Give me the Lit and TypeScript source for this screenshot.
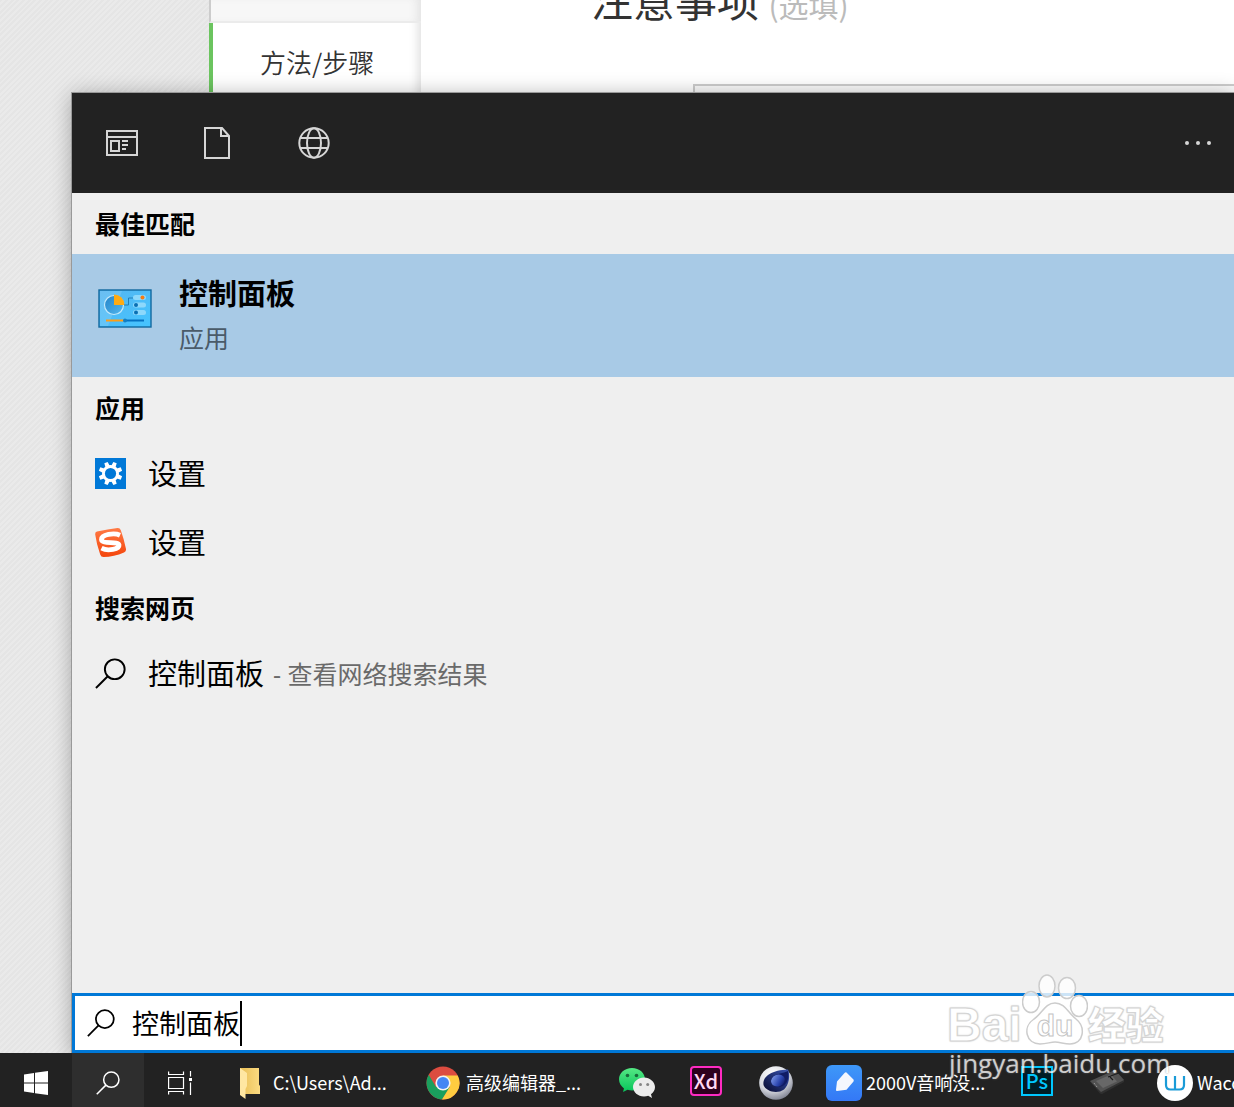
import { LitElement, html, css, svg, nothing, TemplateResult } from "lit";
import { customElement, state } from "lit/decorators.js";

const magnifier = (cls: string, width: number) => html`
  <svg class=${cls} viewBox="0 0 32 32" fill="none" stroke="currentColor" stroke-width=${width} aria-hidden="true">
    <circle cx="20.4" cy="11.6" r="10.2" /><path d="M13.2 18.8L1 31" />
  </svg>`;

const controlPanelIcon = html`
  <svg class="tile" viewBox="0 0 54 40" aria-hidden="true">
    <defs>
      <linearGradient id="cp" x1="0" y1="0" x2="1" y2="1"><stop offset="0" stop-color="#55b5f0" /><stop offset="1" stop-color="#45c4ff" /></linearGradient>
      <linearGradient id="pie" x1="0" y1="0" x2="1" y2="1"><stop offset="0" stop-color="#2384c9" /><stop offset="1" stop-color="#53b7ee" /></linearGradient>
    </defs>
    <rect x="1" y="1" width="52" height="37" fill="url(#cp)" stroke="#12699f" stroke-width="1.4" />
    <path d="M2 2H24L10 37H2Z" fill="#fff" opacity=".13" />
    <circle cx="16" cy="16" r="9.5" fill="url(#pie)" stroke="#c4e9fb" stroke-width="1.2" />
    <path d="M16 16V5.500A10.500 10.500 0 0 1 26.500 16Z" fill="#ffab12" />
    <path d="M26 16H30.500V9H35" fill="none" stroke="#217eb8" />
    <g fill="#8dd8fb"><rect x="35" y="6" width="13" height="5" rx="2.500" /><rect x="35" y="13.500" width="13" height="5" rx="2.500" /><rect x="35" y="21" width="13" height="5" rx="2.500" /></g>
    <circle cx="44.500" cy="8.500" r="2" fill="#f47b13" /><circle cx="38" cy="16" r="2" fill="#096fb4" /><circle cx="38" cy="23.500" r="2" fill="#096fb4" />
    <path d="M8 31.500H26" stroke="#ff9d14" stroke-width="2" /><path d="M28 31.500H46" stroke="#0672c2" stroke-width="2" />
    <circle cx="27" cy="31.500" r="2" fill="#1380c4" />
  </svg>`;

const gearIcon = html`
  <svg class="glyph" viewBox="0 0 31 31" aria-hidden="true">
    <rect width="31" height="31" fill="#0078d7" />
    <g transform="translate(15.500 15.500)" fill="#fff">
      ${[22.5, 67.5, 112.5, 157.5, 202.5, 247.5, 292.5, 337.5].map(
        (a) => svg`<path transform="rotate(${a})" d="M-2.300 -7L-1.800 -11.800H1.800L2.300 -7Z" />`
      )}
      <circle r="8.500" />
    </g>
    <circle cx="15.500" cy="15.500" r="5.600" fill="#0078d7" />
  </svg>`;

const sogouIcon = html`
  <svg class="glyph" viewBox="0 0 31 31" aria-hidden="true">
    <defs><linearGradient id="sg" x1="0" y1="0" x2="0" y2="1"><stop offset="0" stop-color="#ff7a45" /><stop offset="1" stop-color="#f4460c" /></linearGradient></defs>
    <path d="M2 4.500Q13 2 22.500 1Q25 .8 25.800 3.200Q29 12 31 22Q31.300 24.500 29 25.500Q19 29.800 8.500 30Q6 30 5.200 27.500Q1.500 17 .2 7.500Q0 5 2 4.500Z" fill="url(#sg)" />
    <path d="M25 8.200C19 5.500 6.500 7.500 6.500 12.500C6.500 17.500 23 14 24 18C24.500 22 13 24.500 6.500 21.200" fill="none" stroke="#fff" stroke-width="4.800" />
  </svg>`;

const startIcon = html`
  <svg class="s24" viewBox="0 0 24 24" fill="#fff" aria-hidden="true">
    <path d="M0 3.400L10 2V11.400H0ZM11 1.800L24 0V11.400H11ZM0 12.400H10V22L0 20.600ZM11 12.400H24V24L11 22.200Z" />
  </svg>`;

const taskViewIcon = html`
  <svg class="s24" viewBox="0 0 24 24" fill="none" stroke="#fff" stroke-width="1.200" aria-hidden="true">
    <path d="M.6 .5V3.500H15.500V.5M.6 23.500V20.500H15.500V23.500M.6 6.500H15.500V17.500H.6ZM22.500 0V5.500M22.500 11.500V24" />
    <rect x="21" y="7" width="3" height="3" fill="#fff" stroke="none" />
  </svg>`;

const folderIcon = html`
  <svg class="app-icon" viewBox="0 0 36 36" aria-hidden="true">
    <defs><linearGradient id="fd" x1="0" x2="1"><stop offset="0" stop-color="#e9bf55" /><stop offset="1" stop-color="#fbdb82" /></linearGradient></defs>
    <path d="M7 3H26V19.500L27 21V29H7Z" fill="url(#fd)" />
    <path d="M7 3L14 8V21L12.500 24V34L7 30Z" fill="#ffe7a2" />
  </svg>`;

const chromeIcon = html`
  <svg class="app-icon" viewBox="0 0 36 36" aria-hidden="true">
    <circle cx="17" cy="18" r="16.500" fill="#dc4c40" />
    <path d="M2.700 9.800A16.500 16.500 0 0 0 16 34.500L24 22L10 22Z" fill="#1a9f5d" />
    <path d="M17 10.500H31.700A16.500 16.500 0 0 1 16 34.500L24 21.500Z" fill="#ffcc40" />
    <circle cx="17" cy="18" r="7.600" fill="#f3f3f3" /><circle cx="17" cy="18" r="6" fill="#4486f4" />
  </svg>`;

const wechatIcon = html`
  <svg class="app-icon" viewBox="0 0 36 36" aria-hidden="true">
    <defs><linearGradient id="wc" x1="0" y1="0" x2="0" y2="1"><stop offset="0" stop-color="#55e884" /><stop offset="1" stop-color="#07c45b" /></linearGradient></defs>
    <path d="M13 3C5.500 3 0 8 0 14.300C0 18 2 21.300 5 23.400L4 27L8.500 24.800C10 25.300 11.500 25.500 13 25.500C20.500 25.500 26 20.500 26 14.300S20.500 3 13 3Z" fill="url(#wc)" />
    <circle cx="8.500" cy="10.500" r="1.800" fill="#176c3b" /><circle cx="17.500" cy="10.500" r="1.800" fill="#176c3b" />
    <path d="M25 12.500C19 12.500 14 17 14 22S19 31.500 25 31.500C26.500 31.500 28 31.300 29.200 30.800L33 33L32 29.300C34.500 27.500 36 25 36 22C36 17 31 12.500 25 12.500Z" fill="#ececec" />
    <circle cx="21.500" cy="19.500" r="1.500" fill="#858585" /><circle cx="28.700" cy="19.500" r="1.500" fill="#858585" />
  </svg>`;

const cinemaIcon = html`
  <svg class="app-icon" viewBox="0 0 36 36" aria-hidden="true">
    <defs>
      <radialGradient id="c4a" cx=".4" cy=".25" r=".8"><stop offset="0" stop-color="#fff" /><stop offset=".6" stop-color="#d5d7df" /><stop offset="1" stop-color="#777b8a" /></radialGradient>
      <linearGradient id="c4b" x1="0" y1="1" x2="1" y2="0"><stop offset="0" stop-color="#06092e" /><stop offset="1" stop-color="#3a55b5" /></linearGradient>
      <linearGradient id="c4c" x1="0" y1="0" x2="1" y2="1"><stop offset="0" stop-color="#8ba6f0" /><stop offset=".6" stop-color="#2b45b0" /><stop offset="1" stop-color="#0a1150" /></linearGradient>
    </defs>
    <circle cx="19" cy="18" r="16.800" fill="url(#c4a)" />
    <path d="M31 4.500C33.500 10 32 20 27 24.500C20 29.500 9 26.500 6.500 20C5 11 16 5 31 4.500Z" fill="url(#c4b)" />
    <path d="M31 6C32.500 14 30 21 22.500 22C15 22 11.500 16 16 11.500C20 8.500 26 8.500 31 6Z" fill="#101c66" />
    <ellipse cx="21" cy="15.500" rx="7" ry="5.800" transform="rotate(-20 21 15.500)" fill="url(#c4c)" />
  </svg>`;

const editorIcon = html`
  <svg class="app-icon" viewBox="0 0 36 36" aria-hidden="true">
    <defs><linearGradient id="ed" x1="0" y1="0" x2="0" y2="1"><stop offset="0" stop-color="#3e98f8" /><stop offset="1" stop-color="#3478f6" /></linearGradient></defs>
    <rect width="36" height="36" rx="6" fill="url(#ed)" />
    <path d="M20.500 7.500L27.500 14.500Q28 15.500 27.500 16.500L20.500 24.800L11 26Q9.800 26 10 24.800L11 16.500L18.500 8Q19.500 7 20.500 7.500Z" fill="#f4f7fd" />
  </svg>`;

const tabletIcon = html`
  <svg class="app-icon" viewBox="0 0 36 36" aria-hidden="true">
    <path d="M2 16.500L27 5L36 15V17L14 29L12 28.500Z" fill="#303030" />
    <path d="M2 16L27 5L36 15L13 27Z" fill="#525252" />
    <path d="M8 16L23 9.500L29 16.500L15 23Z" fill="#686868" />
    <path d="M20 12L32 7.500M22 12L25 15" stroke="#1c1c1c" stroke-width="1.200" />
    <path d="M6 18L9 22" stroke="#aaa" stroke-dasharray="1 1" />
  </svg>`;

const wacomIcon = html`
  <svg class="app-icon" viewBox="0 0 36 36" aria-hidden="true">
    <circle cx="18" cy="18" r="18" fill="#fff" />
    <path d="M9 11V20Q9 24.500 13.500 24.500H22.500Q27 24.500 27 20V11M18 11V24" fill="none" stroke="#1a9bd7" stroke-width="2.200" />
  </svg>`;

interface Task { name: string; icon: TemplateResult; label?: string; }

const tasks: Task[] = [
  { name: "资源管理器", icon: folderIcon, label: "C:\\Users\\Ad..." },
  { name: "Chrome", icon: chromeIcon, label: "高级编辑器_..." },
  { name: "微信", icon: wechatIcon },
  { name: "Adobe XD", icon: html`<span class="adobe xd">Xd</span>` },
  { name: "Cinema 4D", icon: cinemaIcon },
  { name: "编辑器", icon: editorIcon, label: "2000V音响没..." },
  { name: "Photoshop", icon: html`<span class="adobe ps">Ps</span>` },
  { name: "数位板", icon: tabletIcon },
  { name: "Wacom", icon: wacomIcon, label: "Wacom" },
];

const fonts = css`
  :host { font-family: "Open Sans", "Noto Sans CJK SC", sans-serif; }
  * { box-sizing: border-box; }
  button { font: inherit; color: inherit; background: none; border: 0; padding: 0; margin: 0; text-align: left; }
  svg { display: block; flex: none; }
`;

@customElement("web-page")
export class WebPage extends LitElement {
  static styles = [fonts, css`
    :host {
      display: grid; grid-template-columns: 209px 212px 1fr; height: 100%; overflow: hidden;
      background: #e6e6e6;
    }
    .gutter { background: repeating-linear-gradient(135deg, #e5e5e5 0 2px, #eaeaea 2px 4px); }
    .steps { display: flex; flex-direction: column; background: #fff; box-shadow: inset -8px 0 8px -4px #e4e4e4; }
    .prev { height: 23px; background: #f7f7f7; border-left: 2px solid #ccc; border-bottom: 2px solid #ebebeb; box-shadow: inset -8px 0 8px -4px #e4e4e4; }
    .step {
      height: 80px; padding-left: 47px; border-left: 4px solid #6bc45f;
      font-size: 26px; line-height: 77px; color: #333; text-decoration: none;
      font-family: "Noto Sans CJK SC", sans-serif; font-weight: 350;
    }
    .body { background: #fff; padding-left: 170px; }
    h2 { margin: -31px 0 0; font-size: 42px; line-height: 60px; font-weight: 400; color: #333; font-family: "Noto Sans CJK SC", sans-serif; }
    small { font-size: 30px; color: #bbb; font-weight: 400; }
    .editor { margin: 50px 0 0 102px; height: 200px; border: 2px solid #ccc; border-right: 0; background: #fafafa; }
  `];
  render() {
    return html`
      <div class="gutter"></div>
      <nav class="steps"><div class="prev"></div><a class="step" href="#steps">方法/步骤</a></nav>
      <section class="body">
        <h2>注意事项 <small>(选填)</small></h2>
        <div class="editor"></div>
      </section>`;
  }
}

@customElement("search-panel")
export class SearchPanel extends LitElement {
  @state() private query = "控制面板";
  static styles = [fonts, css`
    :host { display: flex; flex-direction: column; background: #efefef; color: #000; box-shadow: 0 0 0 1px #999, 0 2px 20px rgba(0, 0, 0, 0.32); }
    header { display: flex; height: 100px; padding-left: 2px; background: #222; color: #d6d6d6; }
    header button { width: 96px; display: flex; align-items: center; justify-content: center; }
    .more { margin-left: auto; }
    header .more { width: 70px; }
    .tab { width: 32px; height: 32px; }
    main { flex: 1; }
    h3 { margin: 0; padding-left: 23px; font-size: 25px; line-height: 62px; font-weight: 700; }
    .best { display: flex; align-items: center; gap: 27px; width: 100%; height: 123px; margin-top: -1px; padding-left: 26px; background: #a8cae6; }
    .tile { width: 54px; height: 40px; margin-bottom: 14px; }
    .best-text { display: flex; flex-direction: column; }
    .best-name { font-size: 29px; line-height: 45px; font-weight: 700; }
    .best-kind { font-size: 25px; line-height: 45px; color: #4a5b69; }
    .row { display: flex; align-items: center; width: 100%; height: 69px; padding-left: 23px; font-size: 29px; line-height: 40px; }
    .glyph { width: 31px; height: 31px; margin-right: 22px; }
    .hint { font-size: 25px; color: #6a6a6a; margin-left: 9px; }
    .box { display: flex; align-items: center; height: 60px; padding-left: 12px; border: 3px solid #0078d7; border-right: 0; background: #fff; }
    .lens { width: 28px; height: 28px; margin-right: 17px; }
    input { width: 4em; padding: 0; border: 0; outline: 0; background: none; color: #000; font: 27px/40px "Noto Sans CJK SC", sans-serif; }
    .caret { width: 2px; height: 45px; background: #000; }
  `];
  private onInput(e: Event) { this.query = (e.target as HTMLInputElement).value; }
  render() {
    return html`
      <header>
        <button aria-label="应用">
          <svg class="tab" viewBox="0 0 32 32" fill="none" stroke="currentColor" stroke-width="2" aria-hidden="true">
            <path d="M1 4H31V28H1ZM1 10H31M5 14H13V24H5ZM16 14H22M16 18H22M16 22H20" />
          </svg>
        </button>
        <button aria-label="文档">
          <svg class="tab" viewBox="0 0 32 32" fill="none" stroke="currentColor" stroke-width="2" aria-hidden="true">
            <path d="M3 1H20L27 9V31H3ZM19 1V9H27" />
          </svg>
        </button>
        <button aria-label="网页">
          <svg class="tab" viewBox="0 0 32 32" fill="none" stroke="currentColor" stroke-width="2" aria-hidden="true">
            <circle cx="16" cy="16" r="14.700" /><ellipse cx="16" cy="16" rx="7" ry="14.700" /><path d="M3 11H29M3 21H29" />
          </svg>
        </button>
        <button class="more" aria-label="更多">
          <svg class="tab" viewBox="0 0 32 32" fill="currentColor" aria-hidden="true"><circle cx="4" cy="16" r="2" /><circle cx="15" cy="16" r="2" /><circle cx="26" cy="16" r="2" /></svg>
        </button>
      </header>
      <main>
        <h3>最佳匹配</h3>
        <button class="best">
          ${controlPanelIcon}
          <span class="best-text"><span class="best-name">控制面板</span><span class="best-kind">应用</span></span>
        </button>
        <h3>应用</h3>
        <button class="row">${gearIcon}<span>设置</span></button>
        <button class="row">${sogouIcon}<span>设置</span></button>
        <h3>搜索网页</h3>
        <button class="row">${magnifier("glyph", 2)}<span>控制面板</span><span class="hint">- 查看网络搜索结果</span></button>
      </main>
      <label class="box">
        ${magnifier("lens", 2)}
        <input aria-label="搜索" .value=${this.query} @input=${this.onInput} />
        <span class="caret"></span>
      </label>`;
  }
}

@customElement("task-bar")
export class TaskBar extends LitElement {
  static styles = [fonts, css`
    :host { display: flex; height: 54px; overflow: hidden; background: #222; color: #fff; }
    button { flex: none; display: flex; align-items: center; padding-top: 6px; }
    .system { width: 72px; justify-content: center; }
    .active { background: #2e2e2e; }
    .s24 { width: 24px; height: 24px; }
    .tasks { display: flex; gap: 33px; padding-left: 17px; }
    .task { width: 36px; gap: 4px; font-size: 18px; line-height: 24px; white-space: nowrap; }
    .wide { width: 160px; }
    .app-icon { width: 36px; height: 36px; }
    .label { font-family: "Noto Sans CJK SC", sans-serif; padding-bottom: 2px; }
    .adobe { width: 32px; height: 30px; margin: 0 2px 4px; font: 500 20px/25px "Noto Sans CJK SC", sans-serif; text-align: center; }
    .xd { border: 2px solid #ff2bc2; border-radius: 4px; background: #2e001e; color: #ffd9f4; }
    .ps { border: 2px solid #00c8ff; background: #001d26; color: #00c8ff; }
  `];
  render() {
    return html`
      <button class="system" aria-label="开始">${startIcon}</button>
      <button class="system active" aria-label="搜索">${magnifier("s24", 2)}</button>
      <button class="system" aria-label="任务视图">${taskViewIcon}</button>
      <div class="tasks">
        ${tasks.map((t) => html`
          <button class="task ${t.label ? "wide" : ""}" aria-label=${t.name}>
            ${t.icon}${t.label ? html`<span class="label">${t.label}</span>` : nothing}
          </button>`)}
      </div>`;
  }
}

@customElement("site-mark")
export class SiteMark extends LitElement {
  static styles = [fonts, css`
    :host { display: flex; flex-direction: column; width: 222px; color: #fff; pointer-events: none; }
    .brand { display: flex; align-items: flex-end; height: 72px; }
    .bai { font: 700 48px/44px "Liberation Sans", sans-serif; -webkit-text-stroke: 1px #d4d4d4; text-shadow: 0 0 2px #aaa; }
    .paw { width: 66px; height: 74px; }
    .cn { font: 900 38px/48px "Noto Sans CJK SC", sans-serif; -webkit-text-stroke: 1px #d4d4d4; text-shadow: 0 0 2px #aaa; }
    .url { font-size: 26px; line-height: 32px; opacity: 0.78; text-shadow: 0 0 2px #777; padding-left: 2px; }
  `];
  render() {
    return html`
      <div class="brand">
        <span class="bai">Bai</span>
        <svg class="paw" viewBox="0 0 66 74" fill="#fff" fill-opacity=".8" stroke="#ccc" stroke-width="1.500" aria-hidden="true">
          <ellipse cx="9" cy="29" rx="8.500" ry="10.500" /><ellipse cx="25" cy="13" rx="8" ry="11" />
          <ellipse cx="45" cy="15" rx="8.500" ry="10.500" /><ellipse cx="57" cy="33" rx="8.500" ry="10.500" />
          <path d="M33 30C23 30 20 41 12 46C0 54 4 71 18 71C25 71 28 69 33 69S42 71 48 71C62 71 64 54 54 46C46 40 43 30 33 30Z" />
          <text x="33" y="63" text-anchor="middle" fill="#fff" stroke="#c4c4c4" stroke-width="1" font-family="Liberation Sans, sans-serif" font-weight="700" font-size="30">du</text>
        </svg>
        <span class="cn">经验</span>
      </div>
      <div class="url">jingyan.baidu.com</div>`;
  }
}

@customElement("app-root")
export class AppRoot extends LitElement {
  static styles = css`
    :host { display: flex; flex-direction: column; height: 100vh; min-height: 780px; position: relative; overflow: hidden; }
    .desktop { flex: 1; min-height: 0; position: relative; overflow: hidden; }
    .panel { position: absolute; inset: 93px 0 0 72px; }
    .mark { position: absolute; right: 65px; bottom: 28px; }
  `;
  render() {
    return html`
      <div class="desktop"><web-page></web-page><search-panel class="panel"></search-panel></div>
      <task-bar></task-bar>
      <site-mark class="mark"></site-mark>`;
  }
}
